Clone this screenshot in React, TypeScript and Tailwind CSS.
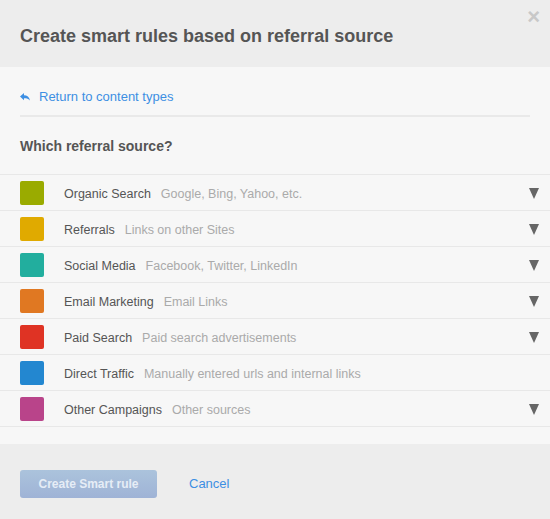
const sources = [
  { name: 'Organic Search', desc: 'Google, Bing, Yahoo, etc.', color: 'bg-[#9aab00]', arrow: true },
  { name: 'Referrals', desc: 'Links on other Sites', color: 'bg-[#e0aa00]', arrow: true },
  { name: 'Social Media', desc: 'Facebook, Twitter, LinkedIn', color: 'bg-[#22ae9e]', arrow: true },
  { name: 'Email Marketing', desc: 'Email Links', color: 'bg-[#e07822]', arrow: true },
  { name: 'Paid Search', desc: 'Paid search advertisements', color: 'bg-[#df3324]', arrow: true },
  { name: 'Direct Traffic', desc: 'Manually entered urls and internal links', color: 'bg-[#2387d0]', arrow: false },
  { name: 'Other Campaigns', desc: 'Other sources', color: 'bg-[#b9448a]', arrow: true },
];

export default function App() {
  return (
    <div className="w-[550px] h-[519px] flex flex-col bg-[#ededed] font-['Liberation_Sans',Arial,sans-serif] relative">
      {/* Header */}
      <div className="h-[67px] flex items-center px-5 shrink-0">
        <h1 className="text-[18px] font-bold text-[#555] pt-[5px]">Create smart rules based on referral source</h1>
      </div>
      <button className="absolute right-[10px] top-[6px] text-[#c8c8c8] text-[22px] font-bold leading-none">×</button>

      {/* Body */}
      <div className="flex-1 bg-[#f7f7f7] flex flex-col">
        <div className="mx-5 h-[50px] flex items-center gap-[9px] border-b-2 border-[#e9e9e9] pt-[12px]">
          <svg width="10" height="8" viewBox="0 0 10 8" className="text-[#3d8fe3]">
            <path d="M0 3.6 L4 0 L4 2.3 C7 2.3 9.4 4 10 7.6 C8.6 5.8 7 5.2 4 5.2 L4 7.2 Z" fill="currentColor" />
          </svg>
          <span className="text-[13px] text-[#3d8fe3]">Return to content types</span>
        </div>
        <h2 className="px-5 pt-[21px] pb-[19px] text-[14px] font-bold text-[#555] leading-[17px]">Which referral source?</h2>
        <div className="border-t border-[#e8e8e8]">
          {sources.map(s => (
            <div key={s.name} className="h-[36px] flex items-center border-b border-[#e8e8e8] pl-5 pr-[11px]">
              <div className={`w-[24px] h-[24px] rounded-[2px] ${s.color}`} />
              <span className="ml-5 pt-[3px] text-[12.5px] text-[#555]">{s.name}</span>
              <span className="ml-[10px] pt-[3px] text-[12.5px] text-[#aaa]">{s.desc}</span>
              {s.arrow && (
                <svg width="10" height="11" viewBox="0 0 10 11" className="ml-auto mt-[2px] text-[#666]">
                  <path d="M0 0 H10 L5 11 Z" fill="currentColor" />
                </svg>
              )}
            </div>
          ))}
        </div>
      </div>

      {/* Footer */}
      <div className="h-[75px] shrink-0 flex items-center px-5 gap-8 pt-[4px]">
        <button className="w-[137px] h-[28px] rounded-[3px] bg-gradient-to-b from-[#abc3dc] to-[#9fb3d6] text-[12px] font-bold text-[#e6edf6]">
          Create Smart rule
        </button>
        <button className="text-[13px] text-[#3d8fe3]">Cancel</button>
      </div>
    </div>
  );
}
